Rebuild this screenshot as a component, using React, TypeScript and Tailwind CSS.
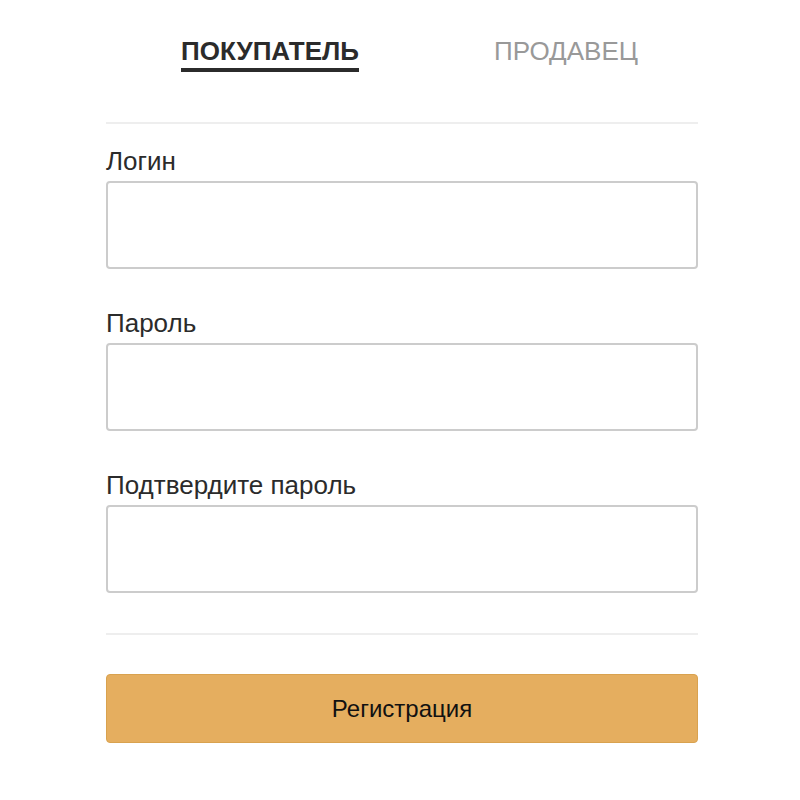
import React from 'react';

const fields = ['Логин', 'Пароль', 'Подтвердите пароль'];

export default function App() {
  return (
    <div className="min-h-[800px] bg-white font-['Liberation_Sans',Arial,sans-serif] text-[#2b2b2b]">
      <div className="ml-[106px] w-[592px] pt-[36px]">
        <div className="grid grid-cols-2 pb-[50px]">
          <div className="flex justify-center pl-8">
            <span className="border-b-[4px] border-[#2b2b2b] pb-[2px] text-[26px] font-bold leading-[30px]">
              ПОКУПАТЕЛЬ
            </span>
          </div>
          <div className="flex justify-center pl-8">
            <span className="pb-[2px] text-[26px] leading-[30px] text-[#999]">ПРОДАВЕЦ</span>
          </div>
        </div>
        <div className="h-[2px] bg-[#eeeeee]" />
        <div className="pt-[22px]">
          {fields.map((label, i) => (
            <div key={i} className={i > 0 ? 'mt-[39px]' : ''}>
              <label className="block text-[26px] leading-[30px]">{label}</label>
              <input
                type={i === 0 ? 'text' : 'password'}
                className="mt-[5px] block h-[88px] w-full rounded-[4px] border-2 border-[#cccccc] bg-white px-3 outline-none"
              />
            </div>
          ))}
        </div>
        <div className="mt-[40px] h-[2px] bg-[#eeeeee]" />
        <button className="mt-[39px] flex h-[69px] w-full items-center justify-center rounded-[4px] border border-[#d9a24f] bg-[#e5ae5f] text-[24px] text-[#111111]">
          Регистрация
        </button>
      </div>
    </div>
  );
}
